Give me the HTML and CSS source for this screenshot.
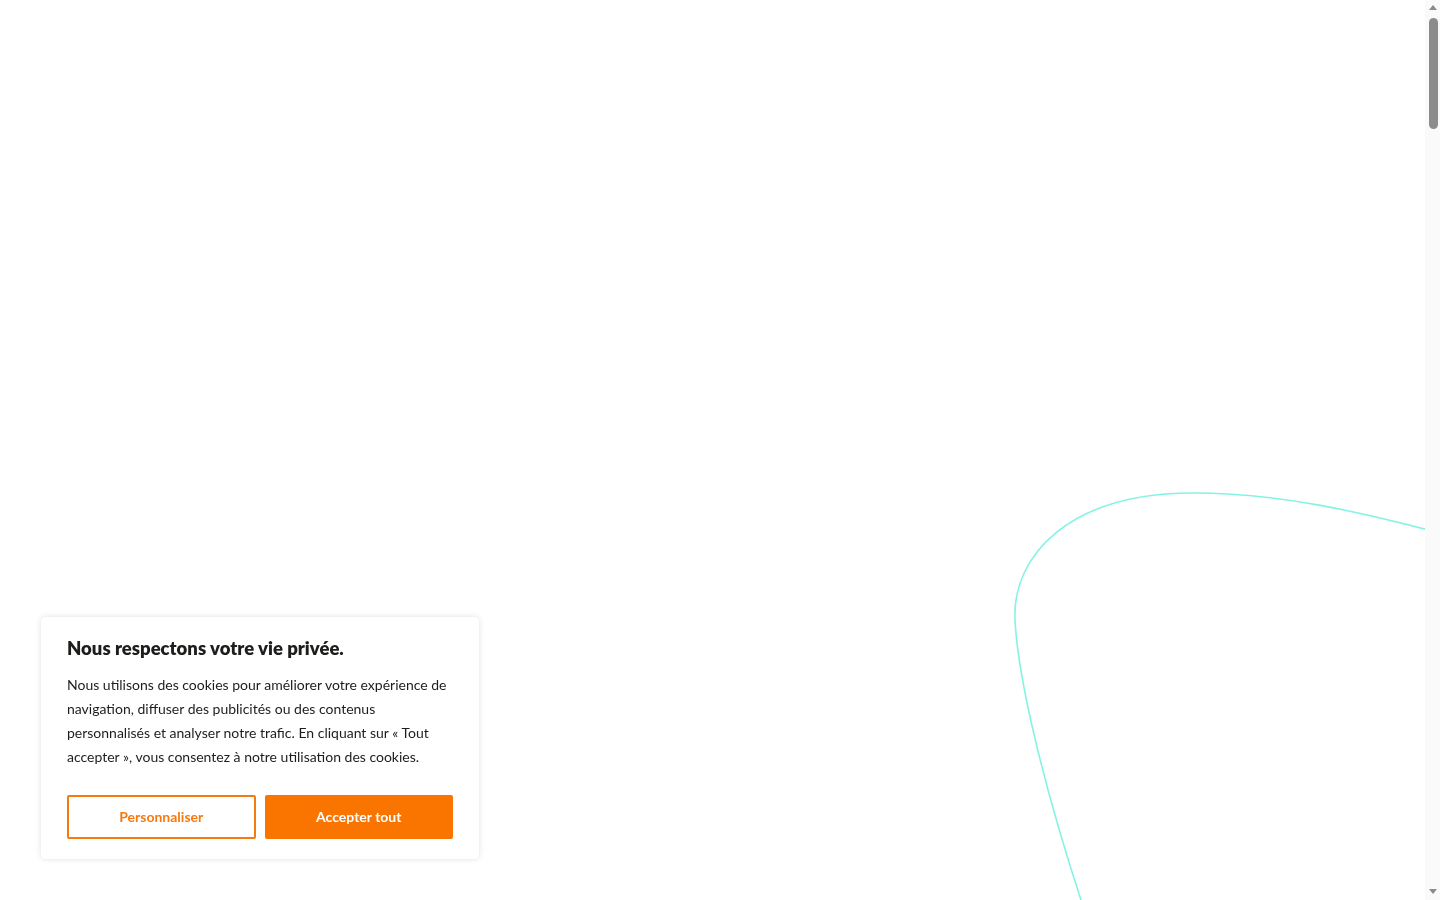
FILE: index.html
```html
<!DOCTYPE html>
<html lang="fr">
<head>
<meta charset="utf-8">
<title>Cookies</title>
<link rel="stylesheet" href="styles.css">
</head>
<body>
<main class="page">
  <svg class="deco" width="1425" height="900" viewBox="0 0 1425 900" aria-hidden="true">
    <path d="M1081 900 C1045 790 1018 680 1015 620 C1012 555 1070 493 1193 493 C1280 493 1360 512 1440 533" fill="none" stroke="#85f3e3" stroke-width="1.6"/>
  </svg>
</main>
<div class="scrollbar" aria-hidden="true">
  <span class="arrow arrow-up"></span>
  <span class="thumb"></span>
  <span class="arrow arrow-down"></span>
</div>
<section class="cookie">
  <h2 class="cookie-title">Nous respectons votre vie privée.</h2>
  <p class="cookie-text">Nous utilisons des cookies pour améliorer votre expérience de navigation, diffuser des publicités ou des contenus personnalisés et analyser notre trafic. En cliquant sur « Tout accepter », vous consentez à notre utilisation des cookies.</p>
  <div class="cookie-actions">
    <button class="btn btn-outline">Personnaliser</button>
    <button class="btn btn-solid">Accepter tout</button>
  </div>
</section>
</body>
</html>
```
FILE: styles.css
```css
html, body {
  margin: 0;
  padding: 0;
  background: #ffffff;
  overflow: hidden;
}
body {
  font-family: "Lato", "Noto Sans", sans-serif;
  color: #1d1d1b;
}
.page {
  position: relative;
  height: 900px;
  width: 1425px;
  overflow: hidden;
}
.deco {
  position: absolute;
  left: 0;
  top: 0;
}
.scrollbar {
  position: fixed;
  top: 0;
  right: 0;
  width: 15px;
  height: 900px;
  background: #fafafa;
  display: flex;
  flex-direction: column;
  align-items: center;
}
.arrow {
  width: 0;
  height: 0;
  border-left: 4px solid transparent;
  border-right: 4px solid transparent;
}
.arrow-up {
  margin-top: 5px;
  border-bottom: 5px solid #8a8a8a;
}
.arrow-down {
  margin-top: auto;
  margin-bottom: 6px;
  border-top: 5px solid #8a8a8a;
}
.thumb {
  margin-top: 8px;
  width: 9px;
  height: 111px;
  border-radius: 5px;
  background: #8c8c8c;
  margin-left: 1px;
}
.cookie {
  position: fixed;
  left: 41px;
  bottom: 41px;
  width: 438px;
  box-sizing: border-box;
  padding: 20px 26px 20px;
  background: #fff;
  border-radius: 5px;
  box-shadow: 0 0 6px rgba(0, 0, 0, 0.12);
}
.cookie-title {
  margin: 0 0 14px;
  font-size: 18.5px;
  font-weight: 800;
  line-height: 22px;
  color: #1d1d1b;
}
.cookie-text {
  margin: 0 0 26px;
  font-size: 14px;
  line-height: 24px;
  color: #1d1d1b;
}
.cookie-actions {
  display: flex;
  gap: 9px;
}
.btn {
  flex: 1;
  height: 44px;
  padding: 0 0 2px;
  border-radius: 2px;
  font-family: inherit;
  font-size: 14px;
  font-weight: 700;
  cursor: pointer;
}
.btn-outline {
  background: #fff;
  color: #f67a10;
  border: 2px solid #f67a10;
}
.btn-solid {
  background: #fa7500;
  color: #fff;
  border: 2px solid #fa7500;
}
```
